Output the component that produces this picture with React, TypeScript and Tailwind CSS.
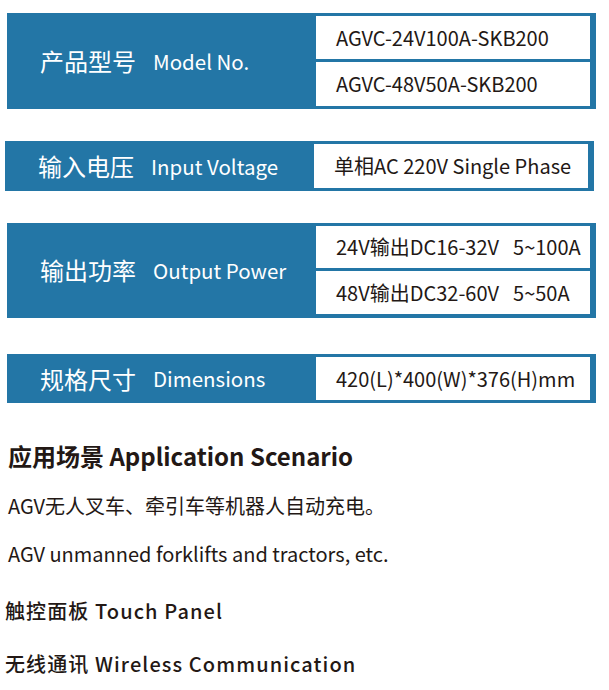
import React from "react";

const font = { fontFamily: '"Noto Sans CJK SC", "Noto Sans", sans-serif' };

function Label({ cn, en }: { cn: string; en: string }) {
  return (
    <div className="flex flex-1 items-center whitespace-nowrap pl-[33px] text-white">
      <span className="text-[24px] leading-none">{cn}</span>
      <span className="ml-[17px] text-[20.5px] leading-none">{en}</span>
    </div>
  );
}

function Cell({ children, h }: { children: React.ReactNode; h: string }) {
  return (
    <div className={`flex items-center whitespace-nowrap bg-white pl-[20px] text-[20px] leading-none text-[#231815] ${h}`}>
      {children}
    </div>
  );
}

export default function App() {
  return (
    <div className="w-[609px] h-[690px] bg-white overflow-hidden" style={font}>
      <div className="h-[13px]" />
      {/* Box 1 */}
      <div className="ml-[7px] flex w-[589px] bg-[#2376a6] pt-[3px] pb-[3px] pr-[6px]">
        <Label cn="产品型号" en="Model No." />
        <div className="flex w-[274px] flex-col gap-[3px]">
          <Cell h="h-[43px]">AGVC-24V100A-SKB200</Cell>
          <Cell h="h-[44px]">AGVC-48V50A-SKB200</Cell>
        </div>
      </div>
      {/* Box 2 */}
      <div className="ml-[5px] mt-[32px] flex w-[589px] bg-[#2376a6] pt-[3px] pb-[3px] pr-[6px]">
        <Label cn="输入电压" en="Input Voltage" />
        <div className="flex w-[274px] flex-col">
          <Cell h="h-[44px]">单相AC 220V Single Phase</Cell>
        </div>
      </div>
      {/* Box 3 */}
      <div className="ml-[7px] mt-[32px] flex w-[589px] bg-[#2376a6] pt-[3px] pb-[4px] pr-[6px]">
        <Label cn="输出功率" en="Output Power" />
        <div className="flex w-[274px] flex-col gap-[3px]">
          <Cell h="h-[42px]">
            24V输出DC16-32V<span className="ml-[14px]">5~100A</span>
          </Cell>
          <Cell h="h-[43px]">
            48V输出DC32-60V<span className="ml-[14px]">5~50A</span>
          </Cell>
        </div>
      </div>
      {/* Box 4 */}
      <div className="ml-[7px] mt-[36px] flex w-[589px] bg-[#2376a6] pt-[3px] pb-[3px] pr-[6px]">
        <Label cn="规格尺寸" en="Dimensions" />
        <div className="flex w-[274px] flex-col">
          <Cell h="h-[43px]">420(L)*400(W)*376(H)mm</Cell>
        </div>
      </div>

      <div className="whitespace-nowrap text-[#231815]">
        <div className="mt-[38px] pl-[8px] text-[24px] font-bold leading-[30px]">
          应用场景 Application Scenario
        </div>
        <div className="mt-[20px] pl-[8px] text-[20px] leading-[30px]">
          AGV无人叉车、牵引车等机器人自动充电。
        </div>
        <div className="mt-[18px] pl-[8px] text-[20px] leading-[30px]">
          AGV unmanned forklifts and tractors, etc.
        </div>
        <div className="mt-[27px] pl-[5px] text-[20px] font-medium leading-[30px] tracking-[1.1px]">
          触控面板 Touch Panel
        </div>
        <div className="mt-[23px] pl-[5px] text-[20px] font-medium leading-[30px] tracking-[1.1px]">
          无线通讯 Wireless Communication
        </div>
      </div>
    </div>
  );
}
